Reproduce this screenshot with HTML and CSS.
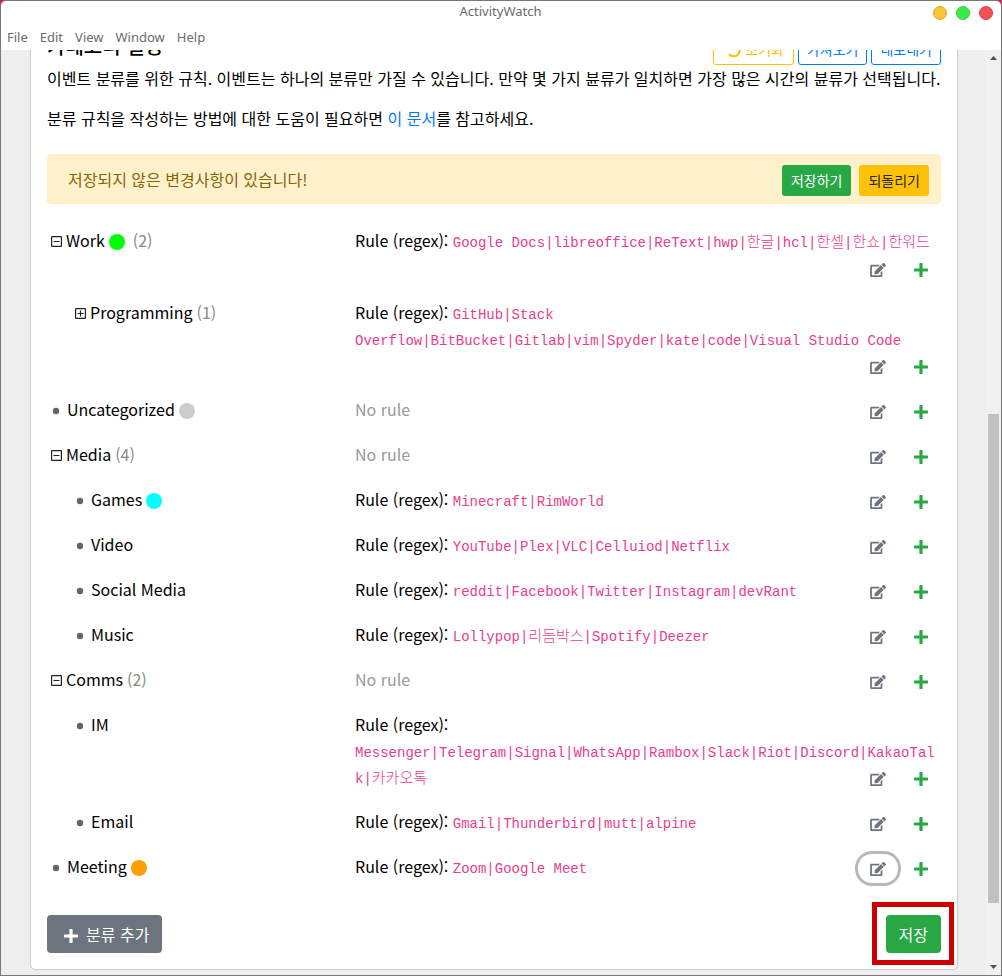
FILE: index.html
```html
<!DOCTYPE html>
<html lang="ko">
<head>
<meta charset="utf-8">
<title>ActivityWatch</title>
<link rel="stylesheet" href="styles.css">
</head>
<body>
<svg class="sprite" aria-hidden="true">
  <symbol id="edit" viewBox="0 0 576 512"><path d="M402.600 83.200l90.200 90.200c3.800 3.800 3.800 10 0 13.800L274.400 405.600l-92.800 10.300c-12.400 1.400-22.900-9.100-21.500-21.500l10.300-92.800L388.800 83.200c3.800-3.800 10-3.800 13.800 0zm162-22.900l-48.800-48.800c-15.200-15.200-39.900-15.200-55.200 0l-35.400 35.400c-3.800 3.800-3.800 10 0 13.800l90.200 90.200c3.800 3.800 10 3.800 13.800 0l35.400-35.400c15.200-15.300 15.200-40 0-55.200zM384 346.200V448H64V128h229.800c3.200 0 6.200-1.300 8.500-3.500l40-40c7.600-7.600 2.200-20.500-8.500-20.500H48C21.500 64 0 85.500 0 112v352c0 26.500 21.500 48 48 48h352c26.500 0 48-21.500 48-48V306.200c0-10.700-12.900-16-20.500-8.500l-40 40c-2.200 2.300-3.500 5.300-3.500 8.500z"/></symbol>
  <symbol id="plus" viewBox="0 0 14 14"><path d="M6 0h2q.6 0 .6.600V5.500h4.800q.6 0 .6.600v1.800q0 .6-.6.600H8.600v4.900q0 .6-.6.600H6q-.6 0-.6-.6V8.500H.6Q0 8.500 0 7.900V6.100q0-.6.600-.6h4.800V.6Q5.400 0 6 0z"/></symbol>
  <symbol id="minus-square" viewBox="0 0 11 11"><path fill="none" stroke="currentColor" stroke-width="1.200" d="M1 .6h9q.4 0 .4.400v9q0 .4-.4.400H1q-.4 0-.4-.4V1q0-.4.400-.4zM2.500 5.500h6"/></symbol>
  <symbol id="plus-square" viewBox="0 0 11 11"><path fill="none" stroke="currentColor" stroke-width="1.200" d="M1 .6h9q.4 0 .4.400v9q0 .4-.4.400H1q-.4 0-.4-.4V1q0-.4.400-.4zM2.500 5.500h6M5.500 2.500v6"/></symbol>
  <symbol id="bullet" viewBox="0 0 11 11"><circle cx="5" cy="6" r="3.200"/></symbol>
  <symbol id="undo" viewBox="0 0 14 14"><path fill="none" stroke="currentColor" stroke-width="2.200" d="M1.200 0v5h5M1.500 4.700A5.900 5.900 0 1 1 2.200 11.200"/></symbol>
</svg>

<div class="window">
  <header class="titlebar">
    <span class="title">ActivityWatch</span>
    <div class="controls">
      <button class="ctl ctl-min" aria-label="Minimize"></button>
      <button class="ctl ctl-max" aria-label="Maximize"></button>
      <button class="ctl ctl-close" aria-label="Close"></button>
    </div>
  </header>
  <nav class="menubar">
    <button>File</button><button>Edit</button><button>View</button><button>Window</button><button>Help</button>
  </nav>

  <div class="viewport">
    <main class="page">
      <section class="card">
        <div class="card-head">
          <h5>카테고리 설정</h5>
          <div class="head-actions">
            <button class="btn btn-sm outline-warning"><svg class="i-undo"><use href="#undo"/></svg>초기화</button>
            <button class="btn btn-sm outline-primary">가져오기</button>
            <button class="btn btn-sm outline-primary">내보내기</button>
          </div>
        </div>
        <p>이벤트 분류를 위한 규칙. 이벤트는 하나의 분류만 가질 수 있습니다. 만약 몇 가지 뷴류가 일치하면 가장 많은 시간의 뷴류가 선택됩니다.</p>
        <p>분류 규칙을 작성하는 방법에 대한 도움이 필요하면 <a href="#docs">이 문서</a>를 참고하세요.</p>

        <div class="alert" role="alert">
          <span>저장되지 않은 변경사항이 있습니다!</span>
          <div class="alert-actions">
            <button class="btn btn-sm success">저장하기</button>
            <button class="btn btn-sm warning">되돌리기</button>
          </div>
        </div>

        <div class="tree">
          <div class="row">
            <div class="name"><svg class="toggle"><use href="#minus-square"/></svg>Work<span class="dot lime"></span><span class="count">(2)</span></div>
            <div class="rule">Rule (regex): <code>Google Docs|libreoffice|ReText|hwp|<span class="ko">한글</span>|hcl|<span class="ko">한셀</span>|<span class="ko">한쇼</span>|<span class="ko">한워드</span></code>
              <div class="actions"><button class="icon-btn" aria-label="Edit"><svg class="i-edit"><use href="#edit"/></svg></button><button class="icon-btn add" aria-label="Add"><svg class="i-plus"><use href="#plus"/></svg></button></div></div>
          </div>
          <div class="row child">
            <div class="name"><svg class="toggle"><use href="#plus-square"/></svg>Programming<span class="count">(1)</span></div>
            <div class="rule">Rule (regex): <code>GitHub|Stack Overflow|BitBucket|Gitlab|vim|Spyder|kate|code|Visual Studio Code</code>
              <div class="actions"><button class="icon-btn" aria-label="Edit"><svg class="i-edit"><use href="#edit"/></svg></button><button class="icon-btn add" aria-label="Add"><svg class="i-plus"><use href="#plus"/></svg></button></div></div>
          </div>
          <div class="row">
            <div class="name"><svg class="toggle bullet"><use href="#bullet"/></svg>Uncategorized<span class="dot grey"></span></div>
            <div class="rule"><span class="none">No rule</span>
              <div class="actions"><button class="icon-btn" aria-label="Edit"><svg class="i-edit"><use href="#edit"/></svg></button><button class="icon-btn add" aria-label="Add"><svg class="i-plus"><use href="#plus"/></svg></button></div></div>
          </div>
          <div class="row">
            <div class="name"><svg class="toggle"><use href="#minus-square"/></svg>Media<span class="count">(4)</span></div>
            <div class="rule"><span class="none">No rule</span>
              <div class="actions"><button class="icon-btn" aria-label="Edit"><svg class="i-edit"><use href="#edit"/></svg></button><button class="icon-btn add" aria-label="Add"><svg class="i-plus"><use href="#plus"/></svg></button></div></div>
          </div>
          <div class="row child">
            <div class="name"><svg class="toggle bullet"><use href="#bullet"/></svg>Games<span class="dot cyan"></span></div>
            <div class="rule">Rule (regex): <code>Minecraft|RimWorld</code>
              <div class="actions"><button class="icon-btn" aria-label="Edit"><svg class="i-edit"><use href="#edit"/></svg></button><button class="icon-btn add" aria-label="Add"><svg class="i-plus"><use href="#plus"/></svg></button></div></div>
          </div>
          <div class="row child">
            <div class="name"><svg class="toggle bullet"><use href="#bullet"/></svg>Video</div>
            <div class="rule">Rule (regex): <code>YouTube|Plex|VLC|Celluiod|Netflix</code>
              <div class="actions"><button class="icon-btn" aria-label="Edit"><svg class="i-edit"><use href="#edit"/></svg></button><button class="icon-btn add" aria-label="Add"><svg class="i-plus"><use href="#plus"/></svg></button></div></div>
          </div>
          <div class="row child">
            <div class="name"><svg class="toggle bullet"><use href="#bullet"/></svg>Social Media</div>
            <div class="rule">Rule (regex): <code>reddit|Facebook|Twitter|Instagram|devRant</code>
              <div class="actions"><button class="icon-btn" aria-label="Edit"><svg class="i-edit"><use href="#edit"/></svg></button><button class="icon-btn add" aria-label="Add"><svg class="i-plus"><use href="#plus"/></svg></button></div></div>
          </div>
          <div class="row child">
            <div class="name"><svg class="toggle bullet"><use href="#bullet"/></svg>Music</div>
            <div class="rule">Rule (regex): <code>Lollypop|<span class="ko">리듬박스</span>|Spotify|Deezer</code>
              <div class="actions"><button class="icon-btn" aria-label="Edit"><svg class="i-edit"><use href="#edit"/></svg></button><button class="icon-btn add" aria-label="Add"><svg class="i-plus"><use href="#plus"/></svg></button></div></div>
          </div>
          <div class="row">
            <div class="name"><svg class="toggle"><use href="#minus-square"/></svg>Comms<span class="count">(2)</span></div>
            <div class="rule"><span class="none">No rule</span>
              <div class="actions"><button class="icon-btn" aria-label="Edit"><svg class="i-edit"><use href="#edit"/></svg></button><button class="icon-btn add" aria-label="Add"><svg class="i-plus"><use href="#plus"/></svg></button></div></div>
          </div>
          <div class="row child">
            <div class="name"><svg class="toggle bullet"><use href="#bullet"/></svg>IM</div>
            <div class="rule">Rule (regex): <code>Messenger|Telegram|Signal|WhatsApp|Rambox|Slack|Riot|Discord|KakaoTalk|<span class="ko">카카오톡</span></code>
              <div class="actions"><button class="icon-btn" aria-label="Edit"><svg class="i-edit"><use href="#edit"/></svg></button><button class="icon-btn add" aria-label="Add"><svg class="i-plus"><use href="#plus"/></svg></button></div></div>
          </div>
          <div class="row child">
            <div class="name"><svg class="toggle bullet"><use href="#bullet"/></svg>Email</div>
            <div class="rule">Rule (regex): <code>Gmail|Thunderbird|mutt|alpine</code>
              <div class="actions"><button class="icon-btn" aria-label="Edit"><svg class="i-edit"><use href="#edit"/></svg></button><button class="icon-btn add" aria-label="Add"><svg class="i-plus"><use href="#plus"/></svg></button></div></div>
          </div>
          <div class="row">
            <div class="name"><svg class="toggle bullet"><use href="#bullet"/></svg>Meeting<span class="dot orange"></span></div>
            <div class="rule">Rule (regex): <code>Zoom|Google Meet</code>
              <div class="actions"><button class="icon-btn focused" aria-label="Edit"><svg class="i-edit"><use href="#edit"/></svg></button><button class="icon-btn add" aria-label="Add"><svg class="i-plus"><use href="#plus"/></svg></button></div></div>
          </div>
        </div>

        <footer class="card-foot">
          <button class="btn secondary"><svg class="i-plus"><use href="#plus"/></svg>분류 추가</button>
          <div class="save"><button class="btn success">저장</button><span class="highlight"></span></div>
        </footer>
      </section>
    </main>
    <div class="scrollbar" aria-hidden="true">
      <svg class="arrow" viewBox="0 0 7 4"><path d="M0 4L3.500 0L7 4z"/></svg>
      <div class="track"><div class="thumb"></div></div>
      <svg class="arrow" viewBox="0 0 7 4"><path d="M0 0L3.500 4L7 0z"/></svg>
    </div>
  </div>
</div>
</body>
</html>
```
FILE: styles.css
```css
* { box-sizing: border-box; }
body {
  margin: 0;
  background: #d81b60;
  color: #000;
  font: 16px/24px "Noto Sans CJK KR", sans-serif;
}
button { font: inherit; color: inherit; border: 0; background: none; padding: 0; }
svg { display: inline-block; fill: currentColor; }
.sprite { position: absolute; width: 0; height: 0; }

.window {
  display: flex;
  flex-direction: column;
  height: 100vh;
  border: 1px solid #777;
  border-radius: 6px 6px 0 0;
  background: #fff;
  overflow: hidden;
}
.titlebar {
  display: grid;
  grid-template-columns: 1fr auto 1fr;
  align-items: center;
  height: 24px;
  padding: 0 8px 0 7px;
  font: 13px/20px "Noto Sans", sans-serif;
  color: #6b6b6b;
}
.title { grid-column: 2; padding-bottom: 4px; }
.controls { display: flex; justify-content: flex-end; gap: 9px; }
.ctl { width: 14px; height: 14px; border-radius: 50%; border: 1px solid; }
.ctl-min { background: #fac536; border-color: #dcab2c; }
.ctl-max { background: #39ea49; border-color: #2fce3e; }
.ctl-close { background: #f24e56; border-color: #d7434b; }
.menubar {
  display: flex;
  align-items: flex-start;
  gap: 12px;
  height: 25px;
  padding: 2px 6px;
  font: 13px/20px "Noto Sans", sans-serif;
  color: #6b6b6b;
}

.viewport { flex: 1; display: flex; min-height: 0; background: #eee; }
.page { flex: 1; min-width: 0; overflow: hidden; padding: 0 27px 0 29px; }
.card {
  margin-top: -33px;
  padding: 16px;
  border: 1px solid #ccc;
  border-radius: 5px;
  background: #fff;
}
.card-head { display: flex; justify-content: space-between; margin-bottom: 1px; }
h5 { margin: 0; font-size: 20px; line-height: 24px; font-weight: 500; }
.head-actions { display: flex; gap: 4px; }
p { margin: 0 0 16px; }
a { color: #007bff; text-decoration: none; }

.btn {
  padding: 6px 12px;
  border: 1px solid transparent;
  border-radius: 4px;
  white-space: nowrap;
}
.btn-sm { padding: 4px 8px; font-size: 14px; line-height: 21px; border-radius: 3px; }
.outline-warning { color: #ffc107; border-color: #ffc107; padding: 4px 9px 4px 13px; }
.outline-primary { color: #007bff; border-color: #007bff; }
.success { background: #28a745; color: #fff; }
.warning { background: #ffc107; color: #212529; }
.secondary { background: #6c757d; color: #fff; padding: 6px 12px 6px 16px; }
.secondary .i-plus { margin-right: 8px; vertical-align: -2px; }
.i-undo { width: 14px; height: 14px; margin-right: 4px; vertical-align: -2px; }

.alert {
  display: flex;
  justify-content: space-between;
  align-items: flex-start;
  margin: 24px 0 16px;
  padding: 10px 11px 7px 20px;
  border: 1px solid #ffeeba;
  border-radius: 4px;
  background: #fff1cc;
  color: #856404;
}
.alert > span { padding-top: 2px; }
.alert-actions { display: flex; gap: 8px; }

.row { display: flex; padding: 7px 0 8px; line-height: 26px; }
.name { flex: 0 0 308px; padding-left: 4px; }
.child .name { padding-left: 28px; }
.rule { flex: 1; min-width: 0; overflow-wrap: break-word; }
.rule::after { content: ""; display: block; clear: both; }
.toggle { width: 11px; height: 11px; margin-right: 4px; vertical-align: 0; color: #222; }
.bullet { margin-right: 5px; color: #666; }
.dot {
  display: inline-block;
  width: 16px;
  height: 16px;
  margin: 0 4px;
  border-radius: 50%;
  vertical-align: -3px;
}
.lime { background: #0f0; }
.grey { background: #ccc; }
.cyan { background: #0ff; }
.orange { background: #ff9e00; }
.count { margin-left: 4px; color: #888; }
.none { color: #999; }
code {
  font-family: "Liberation Mono", "Noto Sans CJK KR", monospace;
  font-size: 14px;
  line-height: 20px;
  color: #e83e8c;
}
.ko { font-size: 15px; font-weight: 300; }
.actions { float: right; display: flex; gap: 3px; margin-top: 1px; }
.icon-btn {
  display: flex;
  align-items: center;
  justify-content: center;
  width: 40px;
  height: 29px;
  border-radius: 14px;
  color: #6c757d;
}
.add { color: #28a745; }
.focused { box-shadow: 0 0 0 3px #b5b8bf; }
.i-edit { width: 16px; height: 14px; }
.i-plus { width: 14px; height: 14px; }

.card-foot { display: flex; justify-content: space-between; margin-top: 24px; }
.save { position: relative; }
.highlight {
  position: absolute;
  inset: -13px -13px -12px -14px;
  border: 5px solid #c00;
  pointer-events: none;
}

.scrollbar {
  display: flex;
  flex-direction: column;
  align-items: center;
  flex: 0 0 16px;
  padding: 6px 0;
  background: #f1f1f1;
  color: #505050;
}
.arrow { width: 7px; height: 4px; }
.track { flex: 1; display: flex; flex-direction: column; justify-content: flex-end; padding-bottom: 62px; }
.thumb { width: 11px; flex: 0 0 auto; height: 58%; background: #c1c1c1; }
```
